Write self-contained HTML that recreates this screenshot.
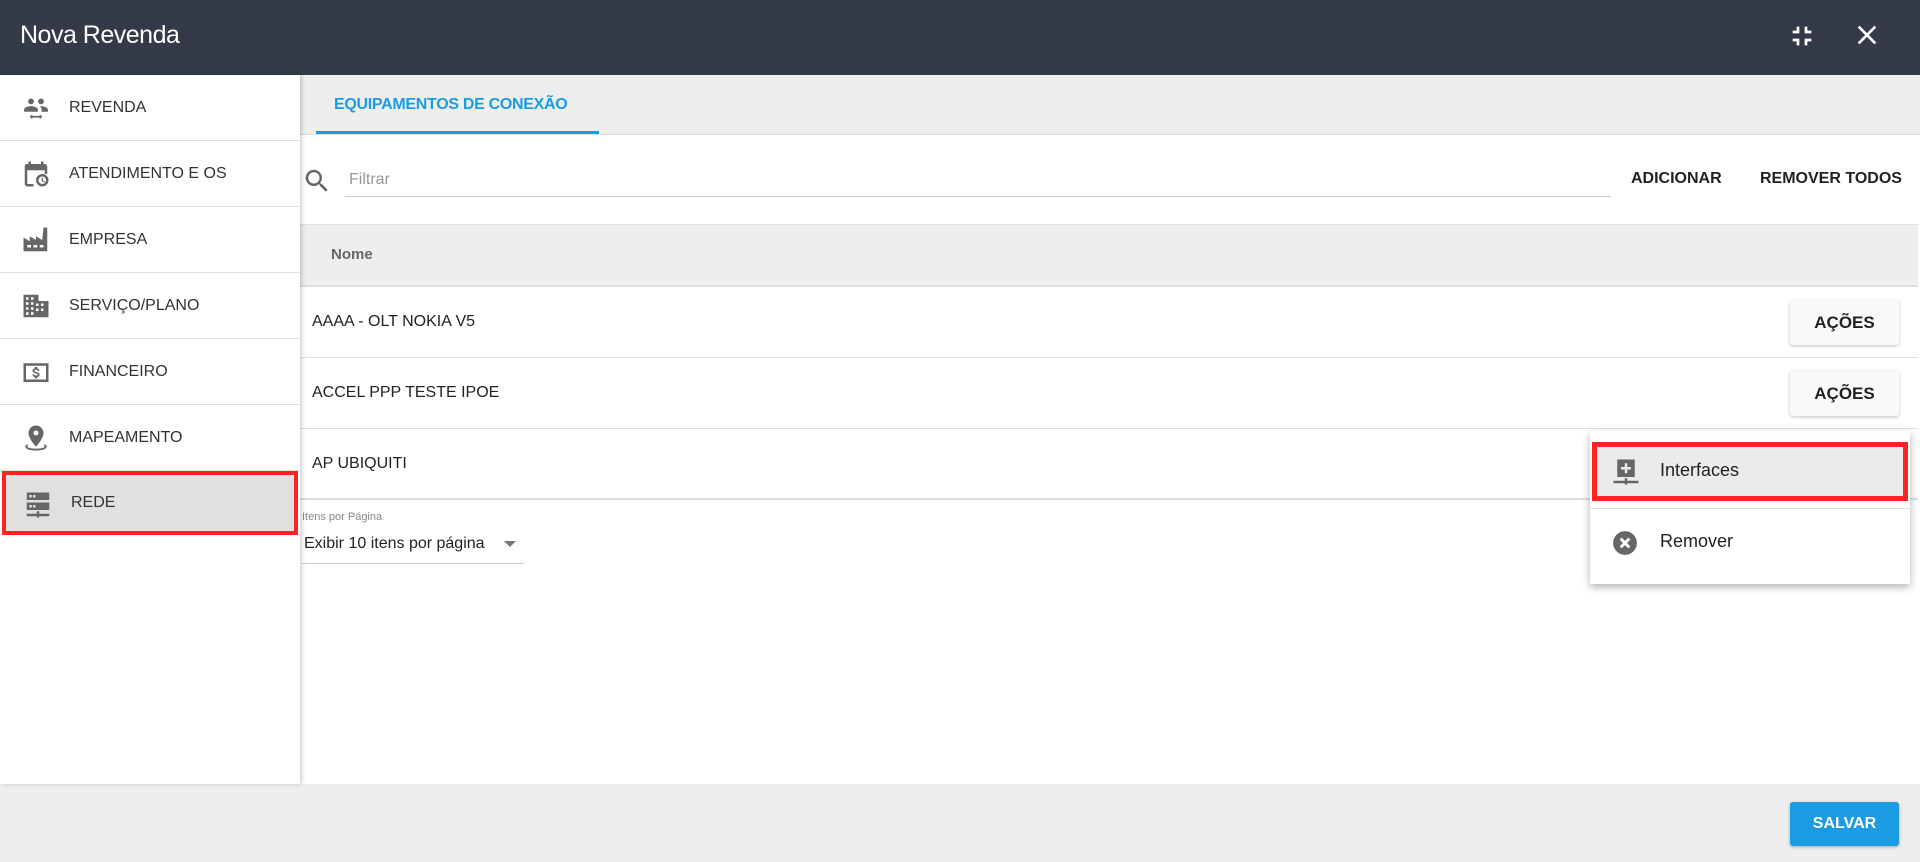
<!DOCTYPE html>
<html><head><meta charset="utf-8"><style>
*{box-sizing:border-box;margin:0;padding:0}
body{width:1920px;height:862px;overflow:hidden;font-family:"Liberation Sans",sans-serif;background:#fff;position:relative;color:#212121}
.abs{position:absolute}
.hdr{left:0;top:0;width:1920px;height:75px;background:#353a48}
.title{left:20px;top:21px;font-size:25px;color:#fff;letter-spacing:-0.5px}
.side{left:0;top:75px;width:300px;height:709px;background:#fff;box-shadow:2px 0 4px rgba(0,0,0,.18);z-index:2}
.item{position:absolute;left:0;width:300px;height:66px;border-bottom:1px solid #e0e0e0;font-size:16px;color:#333;display:flex;align-items:center}
.item span{position:absolute;left:69px}
.item svg{position:absolute;left:21px;top:18px}
.footer{left:0;top:784px;width:1920px;height:78px;background:#eeeeee}
.btn{background:#fafafa;border-radius:3px;box-shadow:0 1px 3px rgba(0,0,0,.25);font-size:17px;font-weight:bold;color:#222;display:flex;align-items:center;justify-content:center}
.row{left:300px;width:1618px;height:71px;border-bottom:1px solid #e0e0e0;font-size:16px;color:#222}
.row span{position:absolute;left:12px;top:26px}
</style></head><body>
<div class="abs hdr"></div>
<div class="abs title">Nova Revenda</div>
<svg class="abs" style="left:1786px;top:20px" width="32" height="32" viewBox="0 0 24 24"><path fill="#fff" d="M5 16h3v3h2v-5H5v2zm3-8H5v2h5V5H8v3zm6 11h2v-3h3v-2h-5v5zm2-11V5h-2v5h5V8h-3z"/></svg>
<svg class="abs" style="left:1851px;top:19px" width="32" height="32" viewBox="0 0 24 24"><path fill="#fff" d="M19 6.41L17.59 5 12 10.59 6.41 5 5 6.41 10.59 12 5 17.59 6.41 19 12 13.41 17.59 19 19 17.59 13.41 12z"/></svg>

<div class="abs side">
 <div class="item" style="top:0"><svg width="30" height="30" viewBox="0 0 24 24"><path fill="#666" d="M16 9c1.3 0 2.3-1 2.3-2.3S17.3 4.5 16 4.5s-2.3 1-2.3 2.2S14.7 9 16 9zM8 9c1.3 0 2.3-1 2.3-2.3S9.3 4.5 8 4.5 5.7 5.5 5.7 6.7 6.7 9 8 9zm0 1.5c-1.8 0-5.5.9-5.5 2.7V15h11v-1.8c0-1.8-3.7-2.7-5.5-2.7zm8 0c-.3 0-.6 0-.9.1 1 .7 1.4 1.6 1.4 2.6V15h5v-1.8c0-1.8-3.7-2.7-5.5-2.7zM7 19l2-2v1.3h6V17l2 2-2 2v-1.3H9V21z"/></svg><span>REVENDA</span></div>
 <div class="item" style="top:66px"><svg width="30" height="30" viewBox="0 0 24 24"><path fill="#666" d="M4 4h2V2h2v2h8V2h2v2h1c1 0 2 1 2 2v6h-2V9H5v11h5v2H5c-1 0-2-1-2-2V6c0-1 1-2 1-2zm13 8a5 5 0 110 10 5 5 0 010-10zm0 2a3 3 0 100 6 3 3 0 000-6zm-.5 1h1v2l1.5 1-.5.8-2-1.3z"/></svg><span>ATENDIMENTO E OS</span></div>
 <div class="item" style="top:132px"><svg width="30" height="30" viewBox="0 0 24 24"><path fill="#666" d="M2 21V10l5 3V9l5 3V9l5 3 1-10h3v19H2zm3-5v2h3v-2zm5 0v2h3v-2zm5 0v2h3v-2z"/></svg><span>EMPRESA</span></div>
 <div class="item" style="top:198px"><svg width="30" height="30" viewBox="0 0 24 24"><path fill="#666" d="M2 3h12v5h8v13H2V3zm2 2v2h2V5zm4 0v2h2V5zm-4 4v2h2V9zm4 0v2h2V9zm-4 4v2h2v-2zm4 0v2h2v-2zm4-3v2h2v-2zm4 0v2h2v-2zm-4 4v2h2v-2zm4 0v2h2v-2zM4 17v2h2v-2zm4 0v2h2v-2z"/></svg><span>SERVIÇO/PLANO</span></div>
 <div class="item" style="top:264px"><svg width="30" height="30" viewBox="0 0 24 24"><path fill="#666" d="M2 5h20v15H2V5zm2 2v11h16V7H4zm7 1h2v1.2c1 .2 1.8.9 1.8 1.8h-1.5c0-.5-.6-.8-1.3-.8s-1.300.3-1.3.8c0 .6.7.8 1.6 1 1.3.3 2.6.8 2.6 2.2 0 1-.8 1.7-1.9 1.900V17h-2v-1c-1.1-.2-1.9-1-1.9-2h1.5c0 .6.7.9 1.4.9.8 0 1.4-.3 1.4-.8 0-.6-.6-.8-1.6-1-1.3-.3-2.6-.8-2.6-2.2 0-.9.8-1.600 1.8-1.8z"/></svg><span>FINANCEIRO</span></div>
 <div class="item" style="top:330px"><svg width="30" height="30" viewBox="0 0 24 24"><path fill="#666" d="M12 2a6 6 0 016 6c0 4.5-6 11-6 11S6 12.5 6 8a6 6 0 016-6zm0 4a2 2 0 100 4 2 2 0 000-4zM5 17c-1 .6-1.5 1.2-1.5 2 0 2 3.8 3 8.5 3s8.5-1 8.5-3c0-.8-.5-1.4-1.5-2l-.8 1.5c.5.2.8.4.8.5 0 .6-2.8 1.5-7 1.5s-7-.9-7-1.5c0-.1.3-.3.8-.5z"/></svg><span>MAPEAMENTO</span></div>
 <div class="item" style="top:396px;background:#e0e0e0;border:4px solid #f22;height:64px;left:2px;width:296px"><svg style="left:17px;top:15px" width="30" height="30" viewBox="0 0 24 24"><path fill="#666" d="M3 2h18v6H3zm2 2v2h2V4zm3 0v2h2V4zM3 10h18v6H3zm2 2v2h2v-2zm3 0v2h2v-2zm3 5h2v2h8v2h-8v1h-2v-1H3v-2h8z"/></svg><span style="left:65px">REDE</span></div>
</div>

<div class="abs" style="left:300px;top:75px;width:1620px;height:60px;background:#eeeeee;border-bottom:1px solid #ddd"></div>
<div class="abs" style="left:334px;top:96px;font-size:16px;font-weight:bold;color:#1a9de6;letter-spacing:-0.3px">EQUIPAMENTOS DE CONEXÃO</div>
<div class="abs" style="left:316px;top:131px;width:283px;height:3px;background:#1a9de6"></div>

<svg class="abs" style="left:302px;top:166px" width="30" height="30" viewBox="0 0 24 24"><path fill="#666" d="M15.5 14h-.8l-.3-.3A6.5 6.5 0 109.5 16a6.5 6.5 0 004.2-1.6l.3.3v.8l5 5 1.5-1.5-5-5zm-6 0a4.5 4.5 0 110-9 4.5 4.5 0 010 9z"/></svg>
<div class="abs" style="left:349px;top:171px;font-size:16px;color:#999">Filtrar</div>
<div class="abs" style="left:345px;top:196px;width:1266px;height:1px;background:#ccc"></div>
<div class="abs" style="left:1631px;top:170px;font-size:16px;font-weight:bold;color:#222">ADICIONAR</div>
<div class="abs" style="left:1760px;top:170px;font-size:16px;font-weight:bold;color:#222">REMOVER TODOS</div>

<div class="abs" style="left:300px;top:224px;width:1618px;height:63px;background:#eeeeee;border-bottom:2px solid #ddd;border-top:1px solid #e0e0e0"></div>
<div class="abs" style="left:331px;top:246px;font-size:15px;font-weight:bold;color:#666">Nome</div>
<div class="abs row" style="top:287px"><span>AAAA - OLT NOKIA V5</span></div>
<div class="abs row" style="top:358px"><span>ACCEL PPP TESTE IPOE</span></div>
<div class="abs row" style="top:429px;border-bottom:2px solid #ddd"><span>AP UBIQUITI</span></div>
<div class="abs btn" style="left:1790px;top:300px;width:109px;height:45px">AÇÕES</div>
<div class="abs btn" style="left:1790px;top:371px;width:109px;height:45px">AÇÕES</div>

<div class="abs" style="left:302px;top:511px;font-size:11px;color:#888">Itens por Página</div>
<div class="abs" style="left:304px;top:535px;font-size:16px;color:#222">Exibir 10 itens por página</div>
<div class="abs" style="left:504px;top:541px;border-left:6px solid transparent;border-right:6px solid transparent;border-top:6px solid #777"></div>
<div class="abs" style="left:302px;top:563px;width:222px;height:1px;background:#ccc"></div>

<div class="abs" style="left:1590px;top:431px;width:320px;height:153px;background:#fff;box-shadow:0 3px 8px rgba(0,0,0,.3);z-index:3">
 <div class="abs" style="left:2px;top:11px;width:316px;height:59px;background:#ebebeb;border:5px solid #f22"></div>
 <svg class="abs" style="left:21px;top:26px" width="30" height="30" viewBox="0 0 24 24"><path fill="#666" d="M5 2h14v14H5zM11 5v3H8v2h3v3h2v-3h3V8h-3V5zM11 17h2v2h9v2h-9v1h-2v-1H2v-2h9z"/></svg>
 <div class="abs" style="left:70px;top:29px;font-size:18px;color:#222">Interfaces</div>
 <div class="abs" style="left:0;top:77px;width:320px;height:1px;background:#ddd"></div>
 <svg class="abs" style="left:22px;top:99px" width="26" height="26" viewBox="0 0 24 24"><circle cx="12" cy="12" r="11" fill="#666"/><path stroke="#fff" stroke-width="2.6" d="M8 8l8 8M16 8l-8 8"/></svg>
 <div class="abs" style="left:70px;top:100px;font-size:18px;color:#222">Remover</div>
</div>

<div class="abs footer"></div>
<div class="abs" style="left:1790px;top:802px;width:109px;height:44px;background:#1a9be2;border-radius:3px;box-shadow:0 1px 3px rgba(0,0,0,.3);color:#fff;font-weight:bold;font-size:16px;display:flex;align-items:center;justify-content:center">SALVAR</div>
</body></html>
